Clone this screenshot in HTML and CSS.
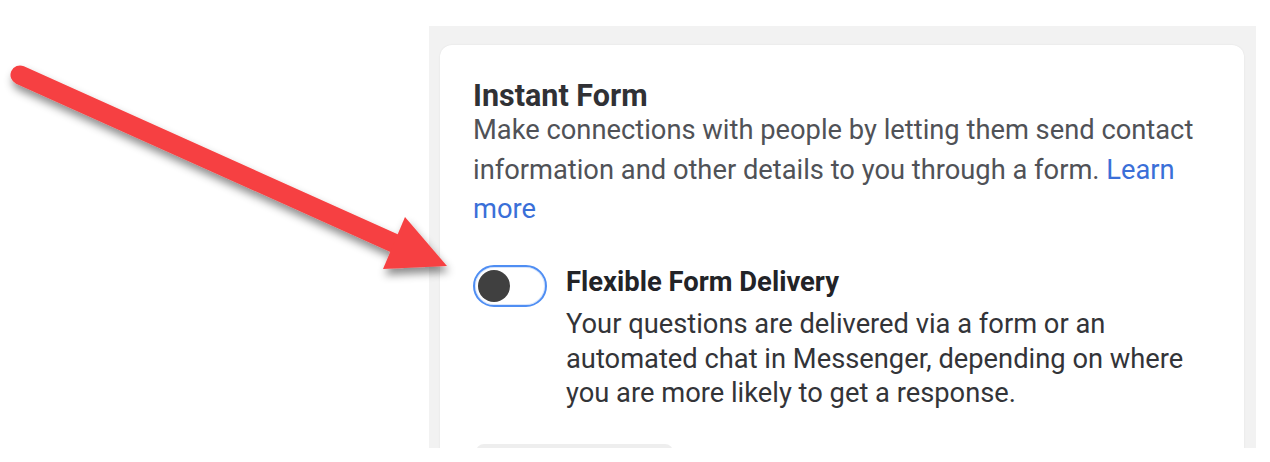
FILE: index.html
```html
<!DOCTYPE html>
<html>
<head>
<meta charset="utf-8">
<link rel="stylesheet" href="styles.css">
</head>
<body>
<div class="stage">
  <div class="panel">
    <div class="card">
      <h2 class="title">Instant Form</h2>
      <p class="intro">Make connections with people by letting them send contact information and other details to you through a form. <a class="link" href="#">Learn more</a></p>
      <div class="option">
        <div class="toggle"><span class="knob"></span></div>
        <div class="option-text">
          <div class="option-title">Flexible Form Delivery</div>
          <p class="option-desc">Your questions are delivered via a form or an automated chat in Messenger, depending on where you are more likely to get a response.</p>
        </div>
      </div>
      <div class="button"></div>
    </div>
  </div>
  <svg class="arrow" width="470" height="300" viewBox="0 0 470 300">
    <defs>
      <filter id="sh" x="-10%" y="-20%" width="130%" height="150%">
        <feDropShadow dx="2" dy="6" stdDeviation="4" flood-color="#000" flood-opacity="0.45"/>
      </filter>
    </defs>
    <g filter="url(#sh)">
      <line x1="20" y1="75" x2="396" y2="244" stroke="#f64142" stroke-width="19" stroke-linecap="round"/>
      <polygon points="405,217 447,266 383,269" fill="#f64142"/>
    </g>
  </svg>
</div>
</body>
</html>
```

FILE: styles.css
```css
html, body {
  margin: 0;
  padding: 0;
  background: #ffffff;
}
.stage {
  position: relative;
  width: 1270px;
  height: 462px;
  font-family: Roboto, "Liberation Sans", sans-serif;
}
.panel {
  box-sizing: border-box;
  margin-left: 429px;
  width: 827px;
  height: 448px;
  overflow: hidden;
  background: linear-gradient(#ffffff 0 26px, #f2f2f2 26px);
  padding: 45px 12px 0 11px;
}
.card {
  background: #ffffff;
  border-radius: 12px;
  box-shadow: 0 0 2px rgba(0,0,0,0.08);
  padding: 36px 33px 40px 33px;
  height: 600px;
  box-sizing: border-box;
}
.title {
  margin: 0;
  font-size: 30.5px;
  line-height: 30px;
  font-weight: 700;
  color: #303135;
}
.intro {
  margin: 0;
  font-size: 27.3px;
  line-height: 39.5px;
  color: #505257;
}
.link {
  color: #3a6fd8;
  text-decoration: none;
}
.option {
  display: flex;
  gap: 19px;
  margin-top: 35.5px;
}
.toggle {
  flex: none;
  width: 74px;
  height: 42px;
  box-sizing: border-box;
  border: 2px solid #4f8ef3;
  border-radius: 21px;
  box-shadow: inset 0 0 0 1px #d9e6fb;
  background: #ffffff;
  display: flex;
  align-items: center;
  padding-left: 3px;
}
.knob {
  width: 32px;
  height: 32px;
  border-radius: 50%;
  background: #404040;
}
.option-text {
  flex: 1;
  padding-top: 2px;
}
.option-title {
  font-size: 27.4px;
  line-height: 30px;
  font-weight: 700;
  color: #222327;
}
.option-desc {
  margin: 10px 0 0 0;
  font-size: 27.3px;
  line-height: 34.5px;
  color: #333438;
}
.button {
  margin-top: 33px;
  margin-left: 3px;
  width: 197px;
  height: 40px;
  border-radius: 8px;
  background: #eeeeee;
}
.arrow {
  position: absolute;
  left: 0;
  top: 0;
}
```
